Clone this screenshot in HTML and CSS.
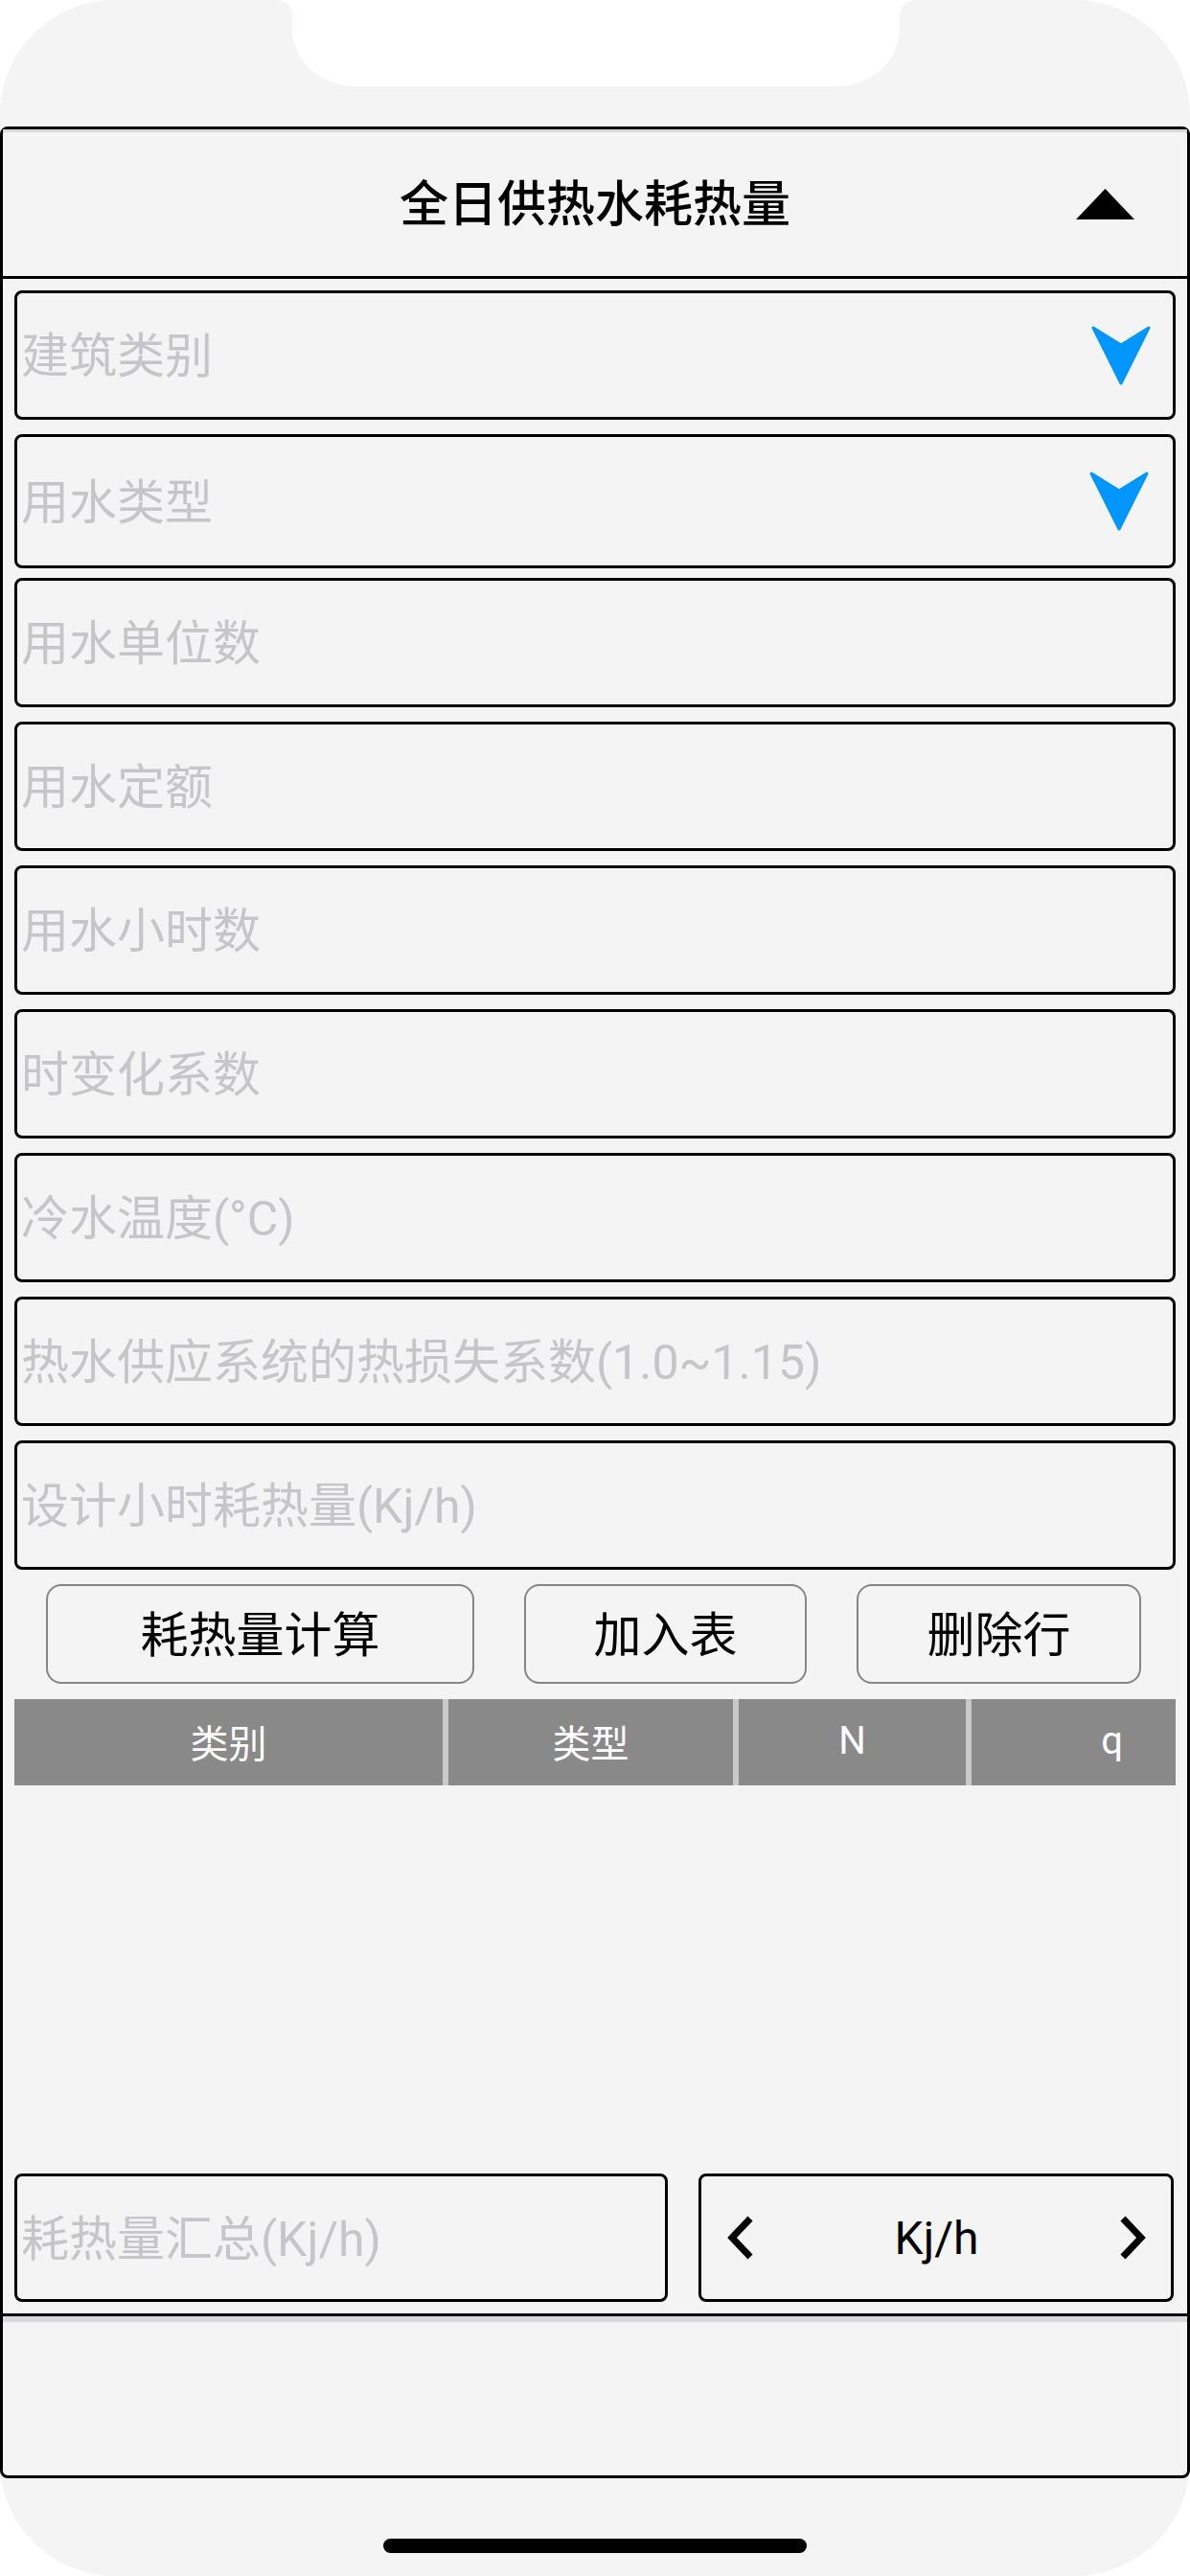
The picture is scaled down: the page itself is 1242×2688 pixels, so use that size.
FILE: index.html
```html
<!DOCTYPE html>
<html lang="zh-CN">
<head>
<meta charset="utf-8">
<title>全日供热水耗热量</title>
<link rel="stylesheet" href="styles.css">
</head>
<body>
<div class="phone">
  <div class="notch"></div>
  <div class="frame">
    <header class="nav">
      <div class="nav-side"></div>
      <h1 class="title">全日供热水耗热量</h1>
      <svg class="collapse" viewBox="0 0 61 32" aria-hidden="true"><polygon points="30.5,0 61,32 0,32"/></svg>
    </header>
    <main class="content">
      <div class="fields">
        <div class="field"><span class="ph">建筑类别</span><svg class="dd" viewBox="0 0 62 62" aria-hidden="true"><path d="M2 2 L31 20 L60 2 L31 60 Z"/></svg></div>
        <div class="field tall"><span class="ph">用水类型</span><svg class="dd dd2" viewBox="0 0 62 62" aria-hidden="true"><path d="M2 2 L31 20 L60 2 L31 60 Z"/></svg></div>
        <div class="field"><span class="ph">用水单位数</span></div>
        <div class="field"><span class="ph">用水定额</span></div>
        <div class="field"><span class="ph">用水小时数</span></div>
        <div class="field"><span class="ph">时变化系数</span></div>
        <div class="field"><span class="ph">冷水温度(°C)</span></div>
        <div class="field"><span class="ph">热水供应系统的热损失系数(1.0~1.15)</span></div>
        <div class="field"><span class="ph">设计小时耗热量(Kj/h)</span></div>
      </div>
      <div class="actions">
        <button class="btn b1">耗热量计算</button>
        <button class="btn b2">加入表</button>
        <button class="btn b3">删除行</button>
      </div>
      <div class="thead">
        <div class="th c1">类别</div>
        <div class="th c2">类型</div>
        <div class="th c3">N</div>
        <div class="th c4">q</div>
      </div>
      <div class="summary">
        <div class="field sum"><span class="ph">耗热量汇总(Kj/h)</span></div>
        <div class="unit">
          <svg class="chev" viewBox="0 0 28 46" aria-hidden="true"><polyline points="24,3 5,23 24,43"/></svg>
          <span class="unit-text">Kj/h</span>
          <svg class="chev" viewBox="0 0 28 46" aria-hidden="true"><polyline points="4,3 23,23 4,43"/></svg>
        </div>
      </div>
    </main>
    <footer class="tabbar"></footer>
  </div>
  <div class="home"></div>
</div>
</body>
</html>
```

FILE: styles.css
```css
html, body {
  margin: 0;
  padding: 0;
  background: #ffffff;
}

.phone {
  width: 1242px;
  height: 2688px;
  box-sizing: border-box;
  padding-top: 132px;
  background: #f4f4f4;
  border-radius: 120px;
  position: relative;
  display: flex;
  flex-direction: column;
  font-family: Roboto, "Noto Sans CJK SC", sans-serif;
}

.notch {
  position: absolute;
  top: 0;
  left: 305px;
  width: 634px;
  height: 90px;
  background: #ffffff;
  border-radius: 0 0 66px 66px / 0 0 60px 60px;
}

.notch::before,
.notch::after {
  content: "";
  position: absolute;
  top: 0;
  width: 16px;
  height: 16px;
}

.notch::before {
  left: -16px;
  background: radial-gradient(circle at 0 100%, transparent 15.5px, #ffffff 16px);
}

.notch::after {
  right: -16px;
  background: radial-gradient(circle at 100% 100%, transparent 15.5px, #ffffff 16px);
}

.frame {
  height: 2454px;
  box-sizing: border-box;
  border: 3px solid #000;
  border-radius: 8px;
  display: flex;
  flex-direction: column;
}

.nav {
  height: 156px;
  box-sizing: border-box;
  border-top: 3px solid #d8d8dc;
  border-bottom: 3px solid #000;
  display: grid;
  grid-template-columns: 1fr auto 1fr;
  align-items: center;
}

.title {
  margin: 0;
  font-size: 51px;
  font-weight: 500;
  color: #000;
  line-height: 1;
  letter-spacing: 0;
}

.collapse {
  justify-self: end;
  width: 61px;
  height: 32px;
  margin-right: 55px;
  fill: #000;
}

.content {
  flex: 1;
  display: flex;
  flex-direction: column;
  padding: 12px;
}

.fields {
  display: flex;
  flex-direction: column;
  gap: 15px;
}

.field {
  height: 135px;
  box-sizing: border-box;
  border: 3px solid #000;
  border-radius: 8px;
  display: flex;
  align-items: center;
  justify-content: space-between;
  padding-left: 4px;
  padding-right: 23px;
}

.field.tall {
  height: 140px;
  margin-bottom: -5px;
}

.ph {
  font-size: 50px;
  color: #c5c5ca;
  white-space: nowrap;
  margin-bottom: 7px;
}

.dd {
  width: 62px;
  height: 62px;
  fill: #0096ff;
  stroke: #0096ff;
  stroke-width: 3;
  stroke-linejoin: round;
}

.dd2 {
  margin-right: 2px;
}

.actions {
  display: flex;
  margin-top: 15px;
  padding-left: 33px;
  gap: 52px;
}

.btn {
  height: 104px;
  box-sizing: border-box;
  border: 2px solid #858585;
  border-radius: 16px;
  background: transparent;
  font-family: inherit;
  font-size: 50px;
  color: #000;
  padding: 0 0 6px;
}

.b1 { width: 447px; }
.b2 { width: 295px; }
.b3 { width: 297px; }

.thead {
  margin-top: 16px;
  height: 90px;
  display: flex;
  gap: 6px;
  background: #c9c9c9;
}

.th {
  background: #898989;
  color: #fff;
  font-size: 40px;
  display: flex;
  align-items: center;
  justify-content: center;
  padding-bottom: 3px;
  box-sizing: border-box;
}

.c1 { width: 447px; }
.c2 { width: 297px; }
.c3 { width: 237px; }
.c4 { width: 213px; padding-left: 80px; }

.summary {
  margin-top: auto;
  display: flex;
  gap: 32px;
}

.field.sum {
  width: 682px;
  height: 134px;
}

.unit {
  width: 496px;
  height: 134px;
  box-sizing: border-box;
  border: 3px solid #000;
  border-radius: 8px;
  display: flex;
  align-items: center;
  justify-content: space-between;
  padding: 0 26px 0 27px;
}

.chev {
  width: 28px;
  height: 46px;
  fill: none;
  stroke: #000;
  stroke-width: 7;
}

.unit-text {
  font-size: 48px;
  color: #000;
}

.tabbar {
  height: 169px;
  box-sizing: border-box;
  border-top: 3px solid #000;
  background: linear-gradient(#d8d8dc 0, #d8d8dc 6px, transparent 6px);
}

.home {
  align-self: center;
  width: 442px;
  height: 15px;
  margin-top: 63px;
  background: #000;
  border-radius: 8px;
}
```
